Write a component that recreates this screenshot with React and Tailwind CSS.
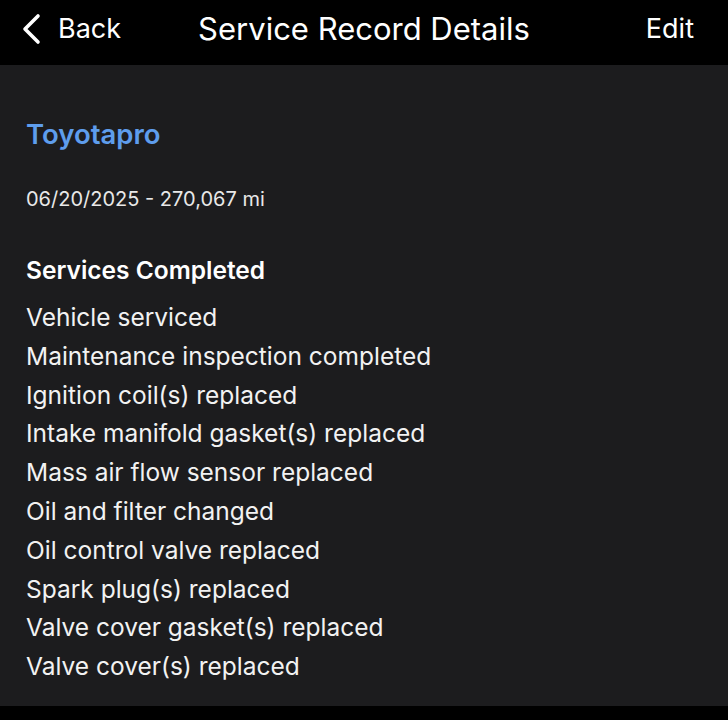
import React from 'react'

const services = [
  'Vehicle serviced',
  'Maintenance inspection completed',
  'Ignition coil(s) replaced',
  'Intake manifold gasket(s) replaced',
  'Mass air flow sensor replaced',
  'Oil and filter changed',
  'Oil control valve replaced',
  'Spark plug(s) replaced',
  'Valve cover gasket(s) replaced',
  'Valve cover(s) replaced',
]

const App = () => {
  return (
    <div className="w-[728px] h-[720px] bg-black flex flex-col font-['Inter',sans-serif] text-white">
      {/* nav bar */}
      <div className="h-[65px] grid grid-cols-[1fr_auto_1fr] items-center px-[20px] pb-[8px] shrink-0">
        <div className="flex items-center gap-[16px]">
          <svg width="22" height="32" viewBox="0 0 22 32" fill="none">
            <path d="M18 3 L5 16 L18 29" stroke="white" strokeWidth="3.6" strokeLinecap="round" strokeLinejoin="round" />
          </svg>
          <span className="text-[27px] leading-none">Back</span>
        </div>
        <div className="text-center text-[31px] leading-none">Service Record Details</div>
        <span className="text-[27px] leading-none text-right pr-[14px]">Edit</span>
      </div>

      {/* body */}
      <div className="h-[641px] bg-[#1c1c1e] px-[26px] pt-[52px] shrink-0">
        <div className="text-[#5e9ded] text-[27.5px] font-semibold leading-[34px]">Toyotapro</div>
        <div className="mt-[36px] text-[20px] leading-[24px] text-[#e8e8e8]">06/20/2025 - 270,067 mi</div>
        <div className="mt-[44px] text-[24.5px] font-semibold leading-[30px]">Services Completed</div>
        <div className="mt-[13px] flex flex-col">
          {services.map((s, i) => (
            <div key={i} className="text-[24.5px] leading-[38.8px] text-[#f2f2f2]">{s}</div>
          ))}
        </div>
      </div>
    </div>
  )
}

export default App
